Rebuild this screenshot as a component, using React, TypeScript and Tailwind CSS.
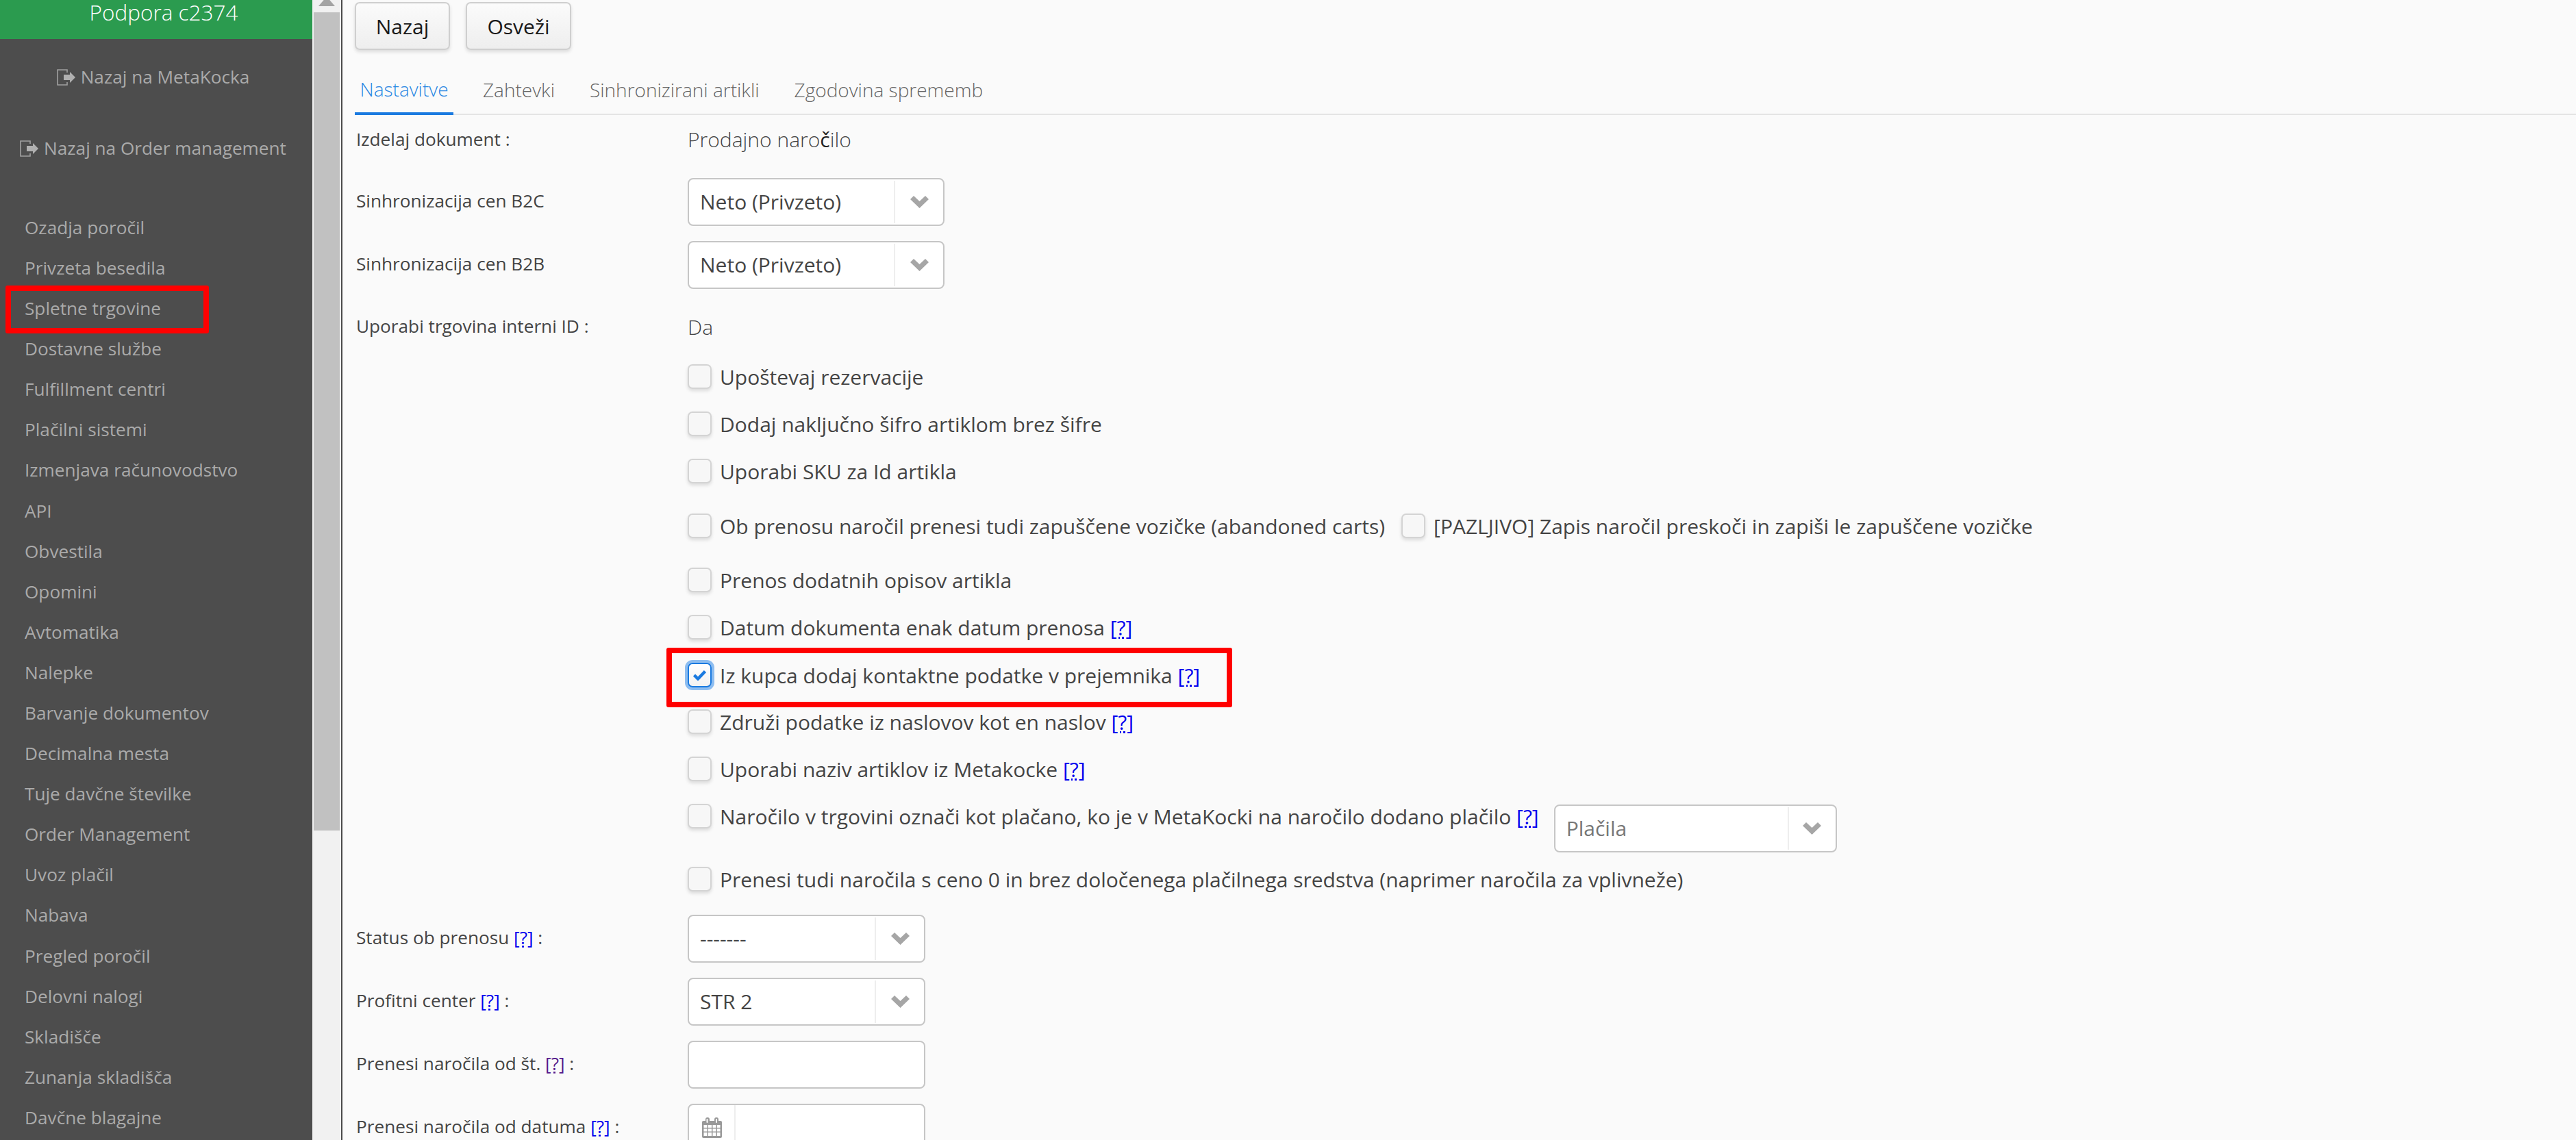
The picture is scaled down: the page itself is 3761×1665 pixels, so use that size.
const sideItems = [
  'Ozadja poročil', 'Privzeta besedila', 'Spletne trgovine', 'Dostavne službe', 'Fulfillment centri',
  'Plačilni sistemi', 'Izmenjava računovodstvo', 'API', 'Obvestila', 'Opomini', 'Avtomatika', 'Nalepke',
  'Barvanje dokumentov', 'Decimalna mesta', 'Tuje davčne številke', 'Order Management', 'Uvoz plačil',
  'Nabava', 'Pregled poročil', 'Delovni nalogi', 'Skladišče', 'Zunanja skladišča', 'Davčne blagajne',
]

function SignOutIcon() {
  return (
    <svg width="27" height="24" viewBox="0 0 27 24" className="shrink-0">
      <path d="M15 5V1H1v22h14v-4" fill="none" stroke="#a0a0a0" strokeWidth="1.6" />
      <path d="M10 8h9V4l8 8-8 8v-4h-9z" fill="#b0b0b0" />
    </svg>
  )
}

function CalendarIcon() {
  return (
    <svg width="29" height="30" viewBox="0 0 29 30">
      <path fillRule="evenodd" fill="#999999" d="M2 5h3V3a3 3 0 0 1 6 0v2h7V3a3 3 0 0 1 6 0v2h3a2 2 0 0 1 2 2v21a2 2 0 0 1-2 2H2a2 2 0 0 1-2-2V7a2 2 0 0 1 2-2zM6.500 3v4a1 1 0 0 0 2 0V3a1 1 0 0 0-2 0zM20 3v4a1 1 0 0 0 2 0V3a1 1 0 0 0-2 0zM2.500 11v4h5v-4zM9 11v4h5v-4zM15.500 11v4h5v-4zM22 11v4h4.500v-4zM2.500 16.500v4h5v-4zM9 16.500v4h5v-4zM15.500 16.500v4h5v-4zM22 16.500v4h4.500v-4zM2.500 22v5h5v-5zM9 22v5h5v-5zM15.500 22v5h5v-5zM22 22v5h4.500v-5z" />
    </svg>
  )
}

function Chevron() {
  return (
    <svg width="27" height="18" viewBox="0 0 27 18">
      <path d="M0 5 5 0l8.500 8L22 0l5 5-13.500 13z" fill="#a6a6a6" />
    </svg>
  )
}

function Help({ visited }: { visited?: boolean }) {
  return (
    <span className={visited ? 'text-[#551a8b] underline decoration-dotted' : 'text-[#0000ee] underline decoration-dotted'}>[?]</span>
  )
}

function Select({ value, width, divider, placeholder, className }: { value: string; width: string; divider: string; placeholder?: boolean; className?: string }) {
  return (
    <div className={`flex h-[70px] ${width} shrink-0 items-center rounded-[8px] border-2 border-[#c6c6c6] bg-white ${className ?? ''}`}>
      <div className={`flex-1 pb-[2px] pl-[16px] ${placeholder ? 'text-[#777777]' : 'text-[#444444]'}`}>{value}</div>
      <div className={`flex h-[62px] ${divider} items-center justify-center border-l-2 border-[#eeeeee]`}>
        <Chevron />
      </div>
    </div>
  )
}

function Row({ label, className, children }: { label?: React.ReactNode; className: string; children: React.ReactNode }) {
  return (
    <div className={`flex h-[70px] items-center ${className}`}>
      <div className="w-[486px] shrink-0 pb-[2px] pl-[2px] text-[26.2px] text-[#444444]">{label}</div>
      {children}
    </div>
  )
}

function Check({ label, checked, className }: { label: React.ReactNode; checked?: boolean; className?: string }) {
  return (
    <span className={`flex items-center ${className ?? ''}`}>
      <span className={checked
        ? 'flex h-[36px] w-[35px] shrink-0 items-center justify-center rounded-[7px] border-2 border-[#1a7ae0] bg-gradient-to-b from-white to-[#f2f2f2] shadow-[0_0_0_4px_#8dbdf0]'
        : 'h-[36px] w-[35px] shrink-0 rounded-[7px] border-2 border-[#d4d4d4] bg-[#f7f7f7] shadow-[0_3px_5px_rgba(0,0,0,0.12)]'}>
        {checked && (
          <svg width="21" height="16" viewBox="0 0 21 16">
            <path d="M2.500 8 8 13.500 18.500 2.500" fill="none" stroke="#1a7ae0" strokeWidth="4.500" />
          </svg>
        )}
      </span>
      <span className="ml-[12px] whitespace-nowrap text-[#444444]">{label}</span>
    </span>
  )
}

export default function App() {
  return (
    <div className="relative flex h-[1665px] w-[3761px] overflow-hidden bg-[#fafafa] font-['Open_Sans',sans-serif]">
      {/* sidebar */}
      <aside className="h-full w-[456px] shrink-0 bg-[#4d4d4d] text-[26.2px] text-[#aaaaaa]">
        <div className="flex h-[57px] items-start justify-center bg-[#2b9b4f] pl-[22px] text-[31.5px] font-light leading-[36px] text-white">Podpora c2374</div>
        <div className="flex h-[106px] items-center justify-center gap-[8px] pt-[10px] pr-[9px] pb-[5px]"><SignOutIcon />Nazaj na MetaKocka</div>
        <div className="flex h-[104px] items-center justify-center gap-[8px] pt-[4px] pr-[9px]"><SignOutIcon />Nazaj na Order management</div>
        <ul className="mt-[36px]">
          {sideItems.map((s) => (
            <li key={s} className="flex h-[59.1px] items-center pl-[36px]">{s}</li>
          ))}
        </ul>
      </aside>

      {/* scrollbar */}
      <div className="flex h-full w-[42px] shrink-0 flex-col bg-[#f1f1f1]">
        <div className="flex h-[18px] justify-center overflow-hidden">
          <div className="-mt-[5px] h-0 w-0 border-x-[12px] border-b-[14px] border-x-transparent border-b-[#a3a3a3]" />
        </div>
        <div className="ml-[2px] h-[1195px] w-[38px] bg-[#c1c1c1]" />
      </div>

      {/* content */}
      <main className="h-full flex-1 border-l-2 border-[#4a4a4a] pl-[18px] text-[30px]">
        <div className="flex gap-[23px] pt-[3px]">
          <button className="h-[70px] w-[139px] rounded-[7px] border-2 border-[#cfcfcf] bg-gradient-to-b from-[#fbfbfb] to-[#eeeeee] text-[#1a1a1a] shadow-[0_3px_5px_rgba(0,0,0,0.12)]">Nazaj</button>
          <button className="h-[70px] w-[154px] rounded-[7px] border-2 border-[#cfcfcf] bg-gradient-to-b from-[#fbfbfb] to-[#eeeeee] text-[#1a1a1a] shadow-[0_3px_5px_rgba(0,0,0,0.12)]">Osveži</button>
        </div>

        <div className="mt-[22px] flex h-[73px] gap-[35px] border-b-2 border-[#e4e4e4] text-[28px] font-light text-[#666666]">
          <div className="-mb-[2px] flex w-[144px] items-center justify-center border-b-[4px] border-[#1a7ae0] text-[#2b87e3]">Nastavitve</div>
          <div className="flex items-center px-[8px]">Zahtevki</div>
          <div className="flex items-center px-[8px]">Sinhronizirani artikli</div>
          <div className="flex items-center px-[8px]">Zgodovina sprememb</div>
        </div>

        <Row label="Izdelaj dokument :" className="mt-[2px]">
          <span className="pb-[3px] font-light text-[#444444]">Prodajno naro<span className="font-normal text-[#222222]">č</span>ilo</span>
        </Row>
        <Row label="Sinhronizacija cen B2C" className="mt-[20px]">
          <Select value="Neto (Privzeto)" width="w-[375px]" divider="w-[72px]" />
        </Row>
        <Row label="Sinhronizacija cen B2B" className="mt-[22px]">
          <Select value="Neto (Privzeto)" width="w-[375px]" divider="w-[72px]" />
        </Row>
        <Row label="Uporabi trgovina interni ID :" className="mt-[21px]">
          <span className="pb-[2px] font-light text-[#444444]">Da</span>
        </Row>

        <Row className="mt-[2px]"><Check label="Upoštevaj rezervacije" /></Row>
        <Row className="-mt-[1px]"><Check label="Dodaj naključno šifro artiklom brez šifre" /></Row>
        <Row className="-mt-[1px]"><Check label="Uporabi SKU za Id artikla" /></Row>
        <Row className="mt-[10px]">
          <Check label="Ob prenosu naročil prenesi tudi zapuščene vozičke (abandoned carts)" />
          <Check className="ml-[24px]" label="[PAZLJIVO] Zapis naročil preskoči in zapiši le zapuščene vozičke" />
        </Row>
        <Row className="mt-[9px]"><Check label="Prenos dodatnih opisov artikla" /></Row>
        <Row className="-mt-[1px]"><Check label={<>Datum dokumenta enak datum prenosa <Help /></>} /></Row>
        <Row className="mt-0"><Check checked label={<>Iz kupca dodaj kontaktne podatke v prejemnika <Help /></>} /></Row>
        <Row className="-mt-[2px]"><Check label={<>Združi podatke iz naslovov kot en naslov <Help /></>} /></Row>
        <Row className="-mt-[1px]"><Check label={<>Uporabi naziv artiklov iz Metakocke <Help /></>} /></Row>
        <Row className="-mt-[1px]">
          <Check label={<>Naročilo v trgovini označi kot plačano, ko je v MetaKocki na naročilo dodano plačilo <Help /></>} />
          <Select value="Plačila" width="w-[413px]" divider="w-[70px]" placeholder className="ml-[22px] mt-[36px]" />
        </Row>
        <Row className="mt-[22px]"><Check label="Prenesi tudi naročila s ceno 0 in brez določenega plačilnega sredstva (naprimer naročila za vplivneže)" /></Row>

        <Row label={<>Status ob prenosu <Help /> :</>} className="mt-[17px]">
          <Select value="-------" width="w-[347px]" divider="w-[72px]" />
        </Row>
        <Row label={<>Profitni center <Help /> :</>} className="mt-[22px]">
          <Select value="STR 2" width="w-[347px]" divider="w-[72px]" />
        </Row>
        <Row label={<>Prenesi naročila od št. <Help visited /> :</>} className="mt-[22px]">
          <div className="h-[70px] w-[347px] rounded-[8px] border-2 border-[#c6c6c6] bg-white" />
        </Row>
        <Row label={<>Prenesi naročila od datuma <Help /> :</>} className="mt-[22px]">
          <div className="flex h-[70px] w-[347px] rounded-[8px] border-2 border-[#c6c6c6] bg-white">
            <div className="flex w-[68px] items-center justify-center border-r-2 border-[#eeeeee]"><CalendarIcon /></div>
          </div>
        </Row>
      </main>

      {/* red highlight boxes drawn over the screenshot */}
      <div className="absolute left-[8px] top-[417px] h-[70px] w-[297px] rounded-[3px] border-[8px] border-[#ff0000]" />
      <div className="absolute left-[973px] top-[946px] h-[87px] w-[826px] rounded-[3px] border-[8px] border-[#ff0000]" />
    </div>
  )
}
